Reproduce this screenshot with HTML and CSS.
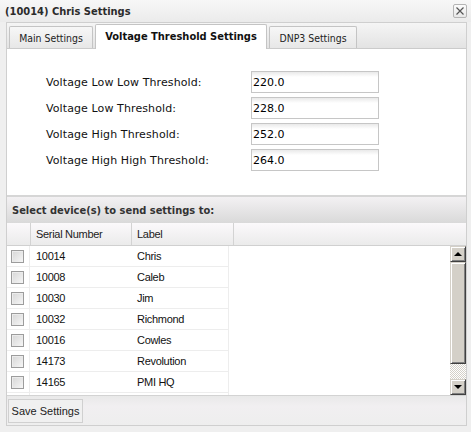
FILE: index.html
```html
<!DOCTYPE html>
<html>
<head>
<meta charset="utf-8">
<link rel="stylesheet" href="styles.css">
</head>
<body>
<div class="title">
  <span class="title-text">(10014) Chris Settings</span>
  <span class="close"><svg width="10" height="10" viewBox="0 0 10 10"><path d="M1.5 1.5 L8.5 8.5 M8.5 1.5 L1.5 8.5" stroke="#555" stroke-width="1.2" fill="none"/></svg></span>
</div>
<div class="frame">
  <div class="tabs">
    <div class="tab tab-main">Main Settings</div>
    <div class="tab tab-active">Voltage Threshold Settings</div>
    <div class="tab tab-dnp">DNP3 Settings</div>
  </div>
  <div class="form">
    <label class="lbl">Voltage Low Low Threshold:</label>
    <input class="field" type="text" value="220.0">
    <label class="lbl">Voltage Low Threshold:</label>
    <input class="field" type="text" value="228.0">
    <label class="lbl">Voltage High Threshold:</label>
    <input class="field" type="text" value="252.0">
    <label class="lbl">Voltage High High Threshold:</label>
    <input class="field" type="text" value="264.0">
  </div>
  <div class="section">Select device(s) to send settings to:</div>
  <div class="ghead">
    <div class="hc hc-check"></div>
    <div class="hc hc-serial">Serial Number</div>
    <div class="hc hc-label">Label</div>
  </div>
  <div class="gbody">
    <div class="rows">
      <div class="row"><div class="c c-check"><span class="cb"></span></div><div class="c c-serial">10014</div><div class="c c-label">Chris</div></div>
      <div class="row"><div class="c c-check"><span class="cb"></span></div><div class="c c-serial">10008</div><div class="c c-label">Caleb</div></div>
      <div class="row"><div class="c c-check"><span class="cb"></span></div><div class="c c-serial">10030</div><div class="c c-label">Jim</div></div>
      <div class="row"><div class="c c-check"><span class="cb"></span></div><div class="c c-serial">10032</div><div class="c c-label">Richmond</div></div>
      <div class="row"><div class="c c-check"><span class="cb"></span></div><div class="c c-serial">10016</div><div class="c c-label">Cowles</div></div>
      <div class="row"><div class="c c-check"><span class="cb"></span></div><div class="c c-serial">14173</div><div class="c c-label">Revolution</div></div>
      <div class="row"><div class="c c-check"><span class="cb"></span></div><div class="c c-serial">14165</div><div class="c c-label">PMI HQ</div></div>
      <div class="row"><div class="c c-check"></div><div class="c c-serial"></div><div class="c c-label"></div></div>
    </div>
    <div class="sbar">
      <div class="sbtn"><span class="arr-up"></span></div>
      <div class="thumb"></div>
      <div class="track"></div>
      <div class="sbtn"><span class="arr-down"></span></div>
    </div>
  </div>
  <div class="toolbar">
    <button class="btn">Save Settings</button>
  </div>
</div>
</body>
</html>
```
FILE: styles.css
```css
* { box-sizing: border-box; }
html, body { margin: 0; padding: 0; }
body {
  width: 471px;
  height: 432px;
  overflow: hidden;
  background: #efefef;
  font-family: "DejaVu Sans", sans-serif;
  color: #000;
}
.title {
  height: 22px;
  display: flex;
  align-items: center;
  justify-content: space-between;
  padding: 0 4px 0 5px;
  background: linear-gradient(#f7f7f7, #ebebeb);
}
.title-text {
  font: bold 11px "DejaVu Sans Condensed", "DejaVu Sans", sans-serif;
  color: #2b2b2b;
}
.close {
  width: 14px;
  height: 14px;
  border: 1px solid #b4b4b4;
  border-radius: 2px;
  background: linear-gradient(#fbfbfb, #e8e8e8);
  display: flex;
  align-items: center;
  justify-content: center;
}
.frame {
  margin-left: 6px;
  width: 461px;
  border: 1px solid #cfcfcf;
  background: #fff;
}
.tabs {
  height: 26px;
  display: flex;
  align-items: flex-end;
  gap: 2px;
  padding-left: 2px;
  background: linear-gradient(#f5f5f5, #e3e3e3);
  border-bottom: 1px solid #cbcbcb;
}
.tab {
  height: 22px;
  border: 1px solid #c4c4c4;
  border-bottom: none;
  border-radius: 2px 2px 0 0;
  background: linear-gradient(#f7f7f7, #e7e7e7);
  display: flex;
  align-items: center;
  justify-content: center;
  font: 10.4px "DejaVu Sans Condensed", "DejaVu Sans", sans-serif;
  color: #222;
}
.tab-main { width: 84px; }
.tab-dnp { width: 88px; }
.tab-active {
  width: 172px;
  height: 25px;
  margin-bottom: -1px;
  padding-bottom: 1px;
  background: #fff;
  font: bold 11px "DejaVu Sans Condensed", "DejaVu Sans", sans-serif;
  color: #111;
}
.form {
  display: grid;
  grid-template-columns: 205px 128px;
  row-gap: 4px;
  align-items: center;
  padding: 22px 0 24px 39px;
  background: #fff;
}
.lbl {
  font-size: 11px;
  letter-spacing: 0.1px;
  color: #111;
}
.field {
  width: 128px;
  height: 22px;
  margin: 0;
  border: 1px solid #c6c6c6;
  padding: 0 1px;
  background: linear-gradient(#e9e9e9, #ffffff 5px);
  font: 11px "DejaVu Sans", sans-serif;
  color: #000;
  outline: none;
}
.section {
  height: 28px;
  border-top: 2px solid #d6d6d6;
  padding-left: 5px;
  display: flex;
  align-items: center;
  background: linear-gradient(#f3f1f3, #d9d9d9);
  font: bold 11px "DejaVu Sans Condensed", "DejaVu Sans", sans-serif;
  color: #333;
}
.ghead {
  height: 23px;
  display: flex;
  border-bottom: 1px solid #d0d0d0;
  background: linear-gradient(#fbf9fb, #ebebeb);
}
.hc {
  display: flex;
  align-items: center;
  padding-left: 5px;
  border-right: 1px solid #d3d3d3;
  font: 11px "Liberation Sans", Arial, sans-serif;
  letter-spacing: -0.3px;
  color: #222;
}
.hc-check { width: 24px; }
.hc-serial { width: 101px; }
.hc-label { width: 102px; }
.gbody {
  height: 149px;
  display: flex;
  background: #fff;
}
.rows {
  flex: 1;
  overflow: hidden;
}
.row {
  width: 222px;
  height: 21px;
  display: flex;
  border-bottom: 1px solid #ededed;
  border-right: 1px solid #ededed;
}
.c {
  display: flex;
  align-items: center;
  font: 11px "Liberation Sans", Arial, sans-serif;
  letter-spacing: -0.3px;
  color: #111;
}
.c-check {
  width: 23px;
  padding-left: 4px;
  border-right: 1px solid #ededed;
}
.c-serial { width: 101px; padding-left: 6px; }
.c-label { flex: 1; padding-left: 6px; }
.cb {
  width: 13px;
  height: 13px;
  border: 1px solid #9c9c9c;
  background: linear-gradient(135deg, #d6d6d6, #f6f6f6);
  box-shadow: inset 1px 1px 0 #ececec;
}
.sbar {
  width: 16px;
  display: flex;
  flex-direction: column;
}
.sbtn, .thumb {
  background: #d4d0c8;
  border: 1px solid;
  border-color: #d4d0c8 #404040 #404040 #d4d0c8;
  box-shadow: inset 1px 1px 0 #fff, inset -1px -1px 0 #808080;
}
.sbtn {
  height: 16px;
  display: flex;
  align-items: center;
  justify-content: center;
}
.thumb { height: 102px; }
.track {
  height: 15px;
  background: repeating-conic-gradient(#ffffff 0 25%, #d4d0c8 0 50%) 0 0 / 2px 2px;
}
.arr-up {
  width: 0; height: 0;
  border-left: 4px solid transparent;
  border-right: 4px solid transparent;
  border-bottom: 4px solid #000;
}
.arr-down {
  width: 0; height: 0;
  border-left: 4px solid transparent;
  border-right: 4px solid transparent;
  border-top: 4px solid #000;
}
.toolbar {
  height: 30px;
  border-top: 1px solid #d3d3d3;
  padding: 3px 0 0 1px;
  background: linear-gradient(#e9e9e9, #f1eff1 35%, #eeeeee);
}
.btn {
  height: 24px;
  width: 75px;
  margin: 0;
  padding: 0;
  border: 1px solid #d0d0d0;
  border-radius: 0;
  background: #f0f0f0;
  font: 11px "Liberation Sans", Arial, sans-serif;
  color: #222;
}
```
